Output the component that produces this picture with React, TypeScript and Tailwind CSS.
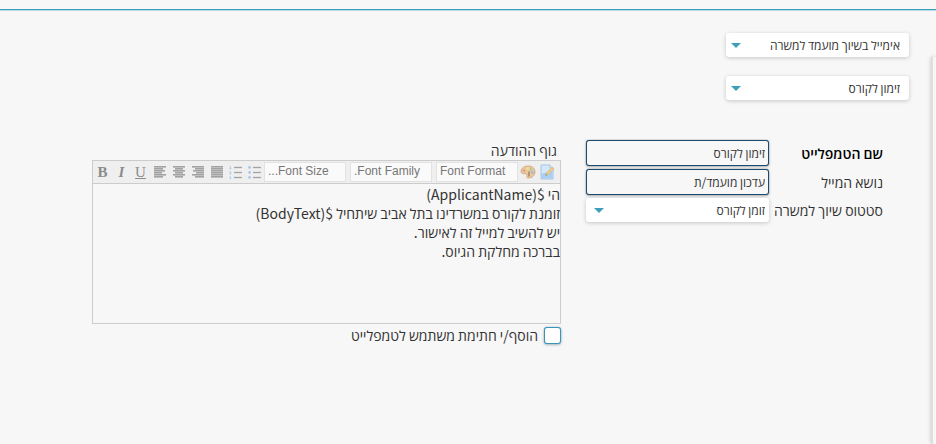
import React, { useState } from 'react';

interface SelectBoxProps {
    id: string;
    label?: string;
    options: string[];
    caretClass?: string;
    textClass?: string;
}

const SelectBox = ({ id, label, options, caretClass = 'left-[5px]', textClass = 'pr-[9px]' }: SelectBoxProps) => (
    <div className="relative">
        <select
            id={id}
            aria-label={label}
            className={`block h-6 w-full appearance-none rounded-[3px] bg-white pl-5 text-[12px] leading-6 text-[#333] shadow-[0_1px_4px_rgba(0,0,0,0.2)] outline-none ${textClass}`}
        >
            {options.map((option) => (
                <option key={option}>{option}</option>
            ))}
        </select>
        <svg viewBox="0 0 10 5" className={`pointer-events-none absolute top-[10px] h-[5px] w-[10px] ${caretClass}`} aria-hidden="true">
            <path d="M0 0h10L5 5z" fill="#3d9fbb" />
        </svg>
    </div>
);

// Horizontal rules for the paragraph icons, as [x, width] per row
const alignRows: { [key: string]: number[][] } = {
    justify: [[0, 12], [0, 12], [0, 12], [0, 12], [0, 12], [0, 12]],
    right: [[0, 12], [3, 9], [1, 11], [4, 8], [0, 12], [3, 9]],
    center: [[0, 12], [2, 8], [0, 12], [2, 8], [0, 12], [2, 8]],
    left: [[0, 12], [0, 9], [0, 11], [0, 8], [0, 12], [0, 9]],
};

const AlignIcon = ({ kind }: { kind: string }) => (
    <svg viewBox="0 0 12 12" className="h-3 w-3" shapeRendering="crispEdges">
        {alignRows[kind].map(([x, width], i) => (
            <g key={i}>
                <rect x={x} y={i * 2} width={width} height="1" fill="#a2a2a2" />
                <rect x={x} y={i * 2 + 1} width={width} height="1" fill="#c0c0c0" />
            </g>
        ))}
    </svg>
);

const ListIcon = ({ ordered }: { ordered?: boolean }) => (
    <svg viewBox="0 0 13 13" className="h-[13px] w-[13px]">
        {[2, 7, 12].map((y) => (
            <g key={y}>
                <path d={`M5 ${y - 0.5}h8`} stroke="#a3a3a3" strokeWidth="1.3" />
                {ordered ? (
                    <path d={`M0.5 ${y - 1.5}h1v2.5M0.3 ${y + 0.8}h2.2`} stroke="#a9cdf0" strokeWidth="0.9" fill="none" />
                ) : (
                    <circle cx="1.6" cy={y - 0.6} r="1.4" fill="#a4c9ee" />
                )}
            </g>
        ))}
    </svg>
);

const PaletteIcon = () => (
    <svg viewBox="0 0 16 16" className="h-4 w-4">
        <path d="M1 7.5C1 4 4.5 2 8.5 2S15 4.5 15 8s-3 6-6.5 6c-2 0-2-1.5-1.6-2.5.4-1.2-.4-2-1.7-1.8C3 10 1 9.5 1 7.5z" fill="#ebc9a0" stroke="#c9a27a" strokeWidth="0.8" />
        <circle cx="4" cy="6.5" r="1.3" fill="#e29a82" />
        <circle cx="7.5" cy="4.6" r="1.3" fill="#f3e08e" />
        <circle cx="11" cy="5.5" r="1.3" fill="#a8cb9b" />
        <circle cx="12.4" cy="8.5" r="1.3" fill="#91b6d8" />
        <path d="M9 7.5v5" stroke="#a88363" strokeWidth="1.5" />
    </svg>
);

const EditIcon = () => (
    <svg viewBox="0 0 16 16" className="h-4 w-4">
        <path d="M2 1h9l3 3v11H2z" fill="#d4e8fa" stroke="#a4c4e4" />
        <path d="M11 1v3h3" fill="#f5faff" stroke="#a4c4e4" />
        <path d="M2.5 10c3-2 8-1 11-3v7.5h-11z" fill="#a9d0f2" />
        <path d="M6.5 11.5l.8-2.5 6-6 1.7 1.7-6 6z" fill="#efcf8b" stroke="#c4a878" strokeWidth="0.6" />
        <path d="M6.5 11.5l.5-1.5 1 1z" fill="#777" />
    </svg>
);

const tools = [
    { name: 'Justify', icon: <AlignIcon kind="justify" /> },
    { name: 'Align right', icon: <AlignIcon kind="right" /> },
    { name: 'Align center', icon: <AlignIcon kind="center" /> },
    { name: 'Align left', icon: <AlignIcon kind="left" /> },
    { name: 'Underline', icon: <span className="underline">U</span> },
    { name: 'Italic', icon: <span className="font-bold italic">I</span> },
    { name: 'Bold', icon: <span className="font-bold">B</span> },
];

const ToolButton = ({ name, children }: { name: string; children: React.ReactNode }) => (
    <button
        type="button"
        aria-label={name}
        className="flex h-5 w-[19px] shrink-0 items-center justify-center font-['Liberation_Serif',serif] text-[15px] leading-5 text-[#8c8c8c]"
    >
        {children}
    </button>
);

const fontMenus = ['Font Format', 'Font Family.', 'Font Size...'];

const initialBody = `הי $(ApplicantName)
זומנת לקורס במשרדינו בתל אביב שיתחיל $(BodyText)
יש להשיב למייל זה לאישור.
בברכה מחלקת הגיוס.`;

const Editor = () => {
    const [body, setBody] = useState(initialBody);

    return (
        <div className="border border-[#ccc]">
            <div className="flex h-[23px] items-center overflow-hidden border-b border-[#ccc] bg-[#efefef] pr-1">
                <ToolButton name="Edit HTML"><EditIcon /></ToolButton>
                <ToolButton name="Text color"><PaletteIcon /></ToolButton>
                <div className="flex shrink-0 gap-1">
                    {fontMenus.map((menu) => (
                        <select
                            key={menu}
                            aria-label={menu}
                            className="h-5 w-[82px] appearance-none border border-[#e2e2e2] bg-[#fafafa] px-[3px] pb-[2px] text-left font-['Liberation_Sans',sans-serif] text-[12px] leading-4 text-[#777]"
                        >
                            <option>{menu}</option>
                        </select>
                    ))}
                </div>
                <ToolButton name="Bulleted list"><ListIcon /></ToolButton>
                <ToolButton name="Numbered list"><ListIcon ordered /></ToolButton>
                {tools.map((tool) => (
                    <ToolButton key={tool.name} name={tool.name}>{tool.icon}</ToolButton>
                ))}
            </div>
            <textarea
                id="body"
                value={body}
                onChange={(e) => setBody(e.target.value)}
                className="block h-[139px] w-full resize-none pt-px text-[14px] leading-[19px] outline-none"
            />
        </div>
    );
};

const inputClass = 'h-[26px] w-full rounded-[3px] border border-[#1f4a6b] bg-[#f7f7f7] px-[3px] text-[12px] shadow-[0_0_1px_#1f4a6b,0_1px_3px_rgba(0,0,0,0.25)] outline-none';

export default function App() {
    return (
        <div dir="rtl" className="flex min-h-screen flex-col bg-[#f7f7f7] font-['Noto_Sans_CJK_SC','Open_Sans',sans-serif] text-[#333]">
            <header className="h-[10px] border-b border-[#3a9dba] shadow-[0_1px_0_#b5dbe6]" />
            <div className="flex flex-1">
                {/* Edge of the side panel */}
                <aside className="mt-[47px] w-[5px] shrink-0 border-l-2 border-[#dedede] bg-[#f7f7f7] shadow-[0_0_4px_rgba(0,0,0,0.2)]" />
                <main className="min-w-0 flex-1 pt-[23px] pr-[22px] pl-[92px]">
                    <div className="flex w-[183px] flex-col gap-[19px]">
                        <SelectBox id="kind" label="סוג" options={['אימייל בשיוך מועמד למשרה']} />
                        <SelectBox id="template" label="טמפלייט" options={['זימון לקורס']} />
                    </div>

                    <form className="mt-10 flex items-start gap-[25px] pr-[26px]">
                        <div className="grid shrink-0 grid-cols-[114px_183px] items-center gap-y-[3px] text-[14px] leading-5">
                            <label htmlFor="name" className="font-semibold text-black">שם הטמפלייט</label>
                            <input id="name" type="text" defaultValue="זימון לקורס" className={inputClass} />
                            <label htmlFor="subject">נושא המייל</label>
                            <input id="subject" type="text" defaultValue="עדכון מועמד/ת" className={inputClass} />
                            <label htmlFor="status" className="whitespace-nowrap">סטטוס שיוך למשרה</label>
                            <SelectBox id="status" options={['זומן לקורס']} caretClass="left-2" textClass="pr-1" />
                        </div>
                        <div className="min-w-0 flex-1">
                            <label htmlFor="body" className="block pr-1 text-[14px] leading-5">גוף ההודעה</label>
                            <Editor />
                            <label className="mt-[2px] flex items-center gap-[6px] text-[14px] leading-[18px]">
                                <input type="checkbox" className="h-[17px] w-[17px] shrink-0 appearance-none rounded-[3px] border border-[#3a93b8] bg-white shadow-[0_0_1px_#3a93b8,0_1px_3px_rgba(0,0,0,0.25)] checked:bg-[#4a9fc0]" />
                                הוסף/י חתימת משתמש לטמפלייט
                            </label>
                        </div>
                    </form>
                </main>
            </div>
        </div>
    );
}
